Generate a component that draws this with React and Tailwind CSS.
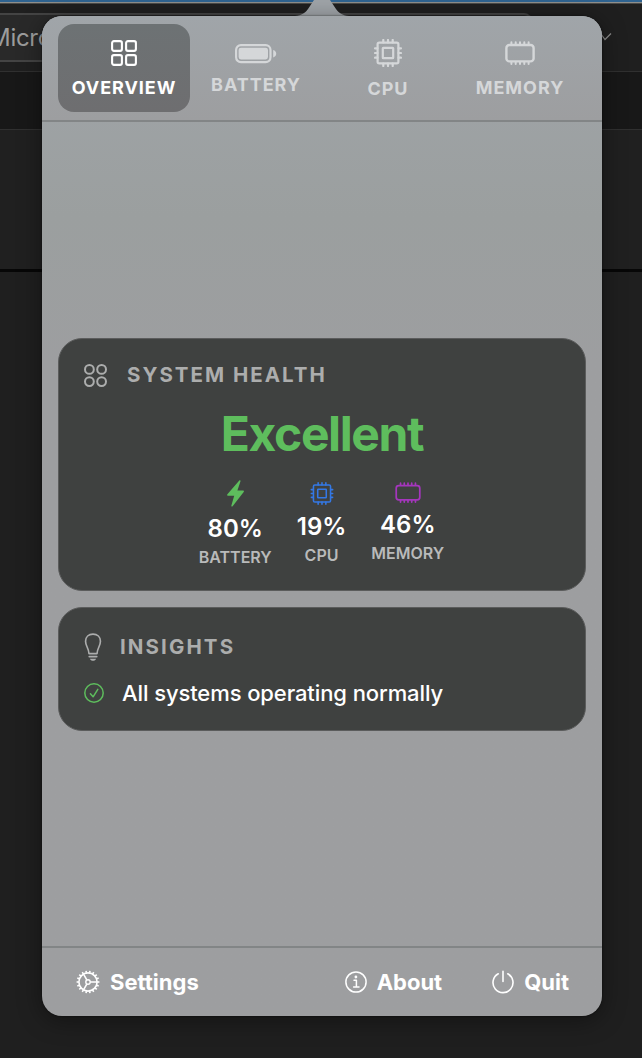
import React from "react";

function CpuIcon({ className, weight = 2.2 }) {
  return (
    <svg viewBox="0 0 28 28" className={className} fill="none" stroke="currentColor" strokeWidth={weight} strokeLinecap="round">
      <rect x="3.6" y="3.6" width="20.8" height="20.8" rx="1.6" />
      <rect x="8.8" y="8.8" width="10.4" height="10.4" rx="0.5" />
      {[9.3, 14, 18.7].map((p) => (
        <path key={p} d={`M${p} 1V3.5M${p} 24.5V27M1 ${p}H3.5M24.5 ${p}H27`} />
      ))}
    </svg>
  );
}

function MemoryIcon({ className, weight = 2.4 }) {
  return (
    <svg viewBox="0 0 30 24" className={className} fill="none" stroke="currentColor" strokeWidth={weight} strokeLinecap="round">
      <rect x="1.4" y="4" width="27.2" height="16.4" rx="3" />
      {[6.4, 10.7, 15, 19.3, 23.6].map((p) => (
        <path key={p} d={`M${p} 1.2V3.5M${p} 21V23`} strokeWidth="2" />
      ))}
    </svg>
  );
}

function BatteryIcon({ className }) {
  return (
    <svg viewBox="0 0 42 20" className={className} fill="none">
      <rect x="1.1" y="1.1" width="34.4" height="17" rx="4.8" stroke="currentColor" strokeWidth="2.2" />
      <rect x="3.6" y="3.7" width="29.4" height="11.8" rx="2.4" fill="currentColor" />
      <path d="M38.2 6C42.2 7.2 42.2 12.2 38.2 13.4Z" fill="currentColor" />
    </svg>
  );
}

function GridIcon({ className }) {
  return (
    <svg viewBox="0 0 26 26" className={className} fill="none" stroke="currentColor" strokeWidth="2.1">
      <rect x="1.1" y="1.1" width="9.8" height="9.8" rx="1.8" />
      <rect x="15.1" y="1.1" width="9.8" height="9.8" rx="1.8" />
      <rect x="1.1" y="15.1" width="9.8" height="9.8" rx="1.8" />
      <rect x="15.1" y="15.1" width="9.8" height="9.8" rx="1.8" />
    </svg>
  );
}

function CirclesIcon({ className }) {
  return (
    <svg viewBox="0 0 23 23" className={className} fill="none" stroke="currentColor" strokeWidth="2">
      <circle cx="5.4" cy="5.4" r="4.4" />
      <circle cx="17.6" cy="5.4" r="4.4" />
      <circle cx="5.4" cy="17.6" r="4.4" />
      <circle cx="17.6" cy="17.6" r="4.4" />
    </svg>
  );
}

function BoltIcon({ className }) {
  return (
    <svg viewBox="0 0 17 27" className={className} fill="currentColor">
      <path d="M12.3.6C12.9-.1 13.8.3 13.5 1.2L10.4 10.6H16.2C17 10.6 17.2 11.3 16.7 11.9L5.6 26.2C5 26.9 4.1 26.5 4.4 25.6L7.2 15.7H.9C.1 15.7-.2 15 .4 14.3Z" />
    </svg>
  );
}

function BulbIcon({ className }) {
  return (
    <svg viewBox="0 0 18 30" className={className} fill="none" stroke="currentColor" strokeWidth="1.7" strokeLinecap="round" strokeLinejoin="round">
      <path d="M4.8 21.3C4.6 15.5 1.3 13.5 1.3 8.6C1.3 4 4.6 1.2 9 1.2S16.7 4 16.7 8.6C16.7 13.5 13.4 15.5 13.2 21.3Z" />
      <path d="M5.2 24.4H12.8" strokeWidth="1.9" />
      <path d="M5.9 26.6H12.1C11.6 29.4 6.4 29.4 5.9 26.6Z" fill="currentColor" stroke="none" />
    </svg>
  );
}

function CheckIcon({ className }) {
  return (
    <svg viewBox="0 0 20 20" className={className} fill="none" stroke="currentColor" strokeWidth="1.5" strokeLinecap="round" strokeLinejoin="round">
      <circle cx="10" cy="10" r="9.2" />
      <path d="M6.4 10.7L9.1 13.8L13.8 6.4" />
    </svg>
  );
}

function GearIcon({ className }) {
  return (
    <svg viewBox="0 0 24 24" className={className} fill="none" stroke="currentColor" strokeWidth="1.6">
      <circle cx="12" cy="12" r="9.1" />
      <circle cx="12" cy="12" r="2.2" strokeWidth="1.4" />
      <path d="M14.3 12H21M10.9 10L7.5 4.2M10.9 14L7.5 19.8" strokeWidth="1.5" />
      {Array.from({ length: 18 }, (_, i) => (
        <path key={i} d="M12 .6V2.8" strokeWidth="1.6" transform={`rotate(${i * 20 + 10} 12 12)`} />
      ))}
    </svg>
  );
}

function InfoIcon({ className }) {
  return (
    <svg viewBox="0 0 22 22" className={className} fill="none" stroke="currentColor" strokeWidth="1.5" strokeLinecap="round" strokeLinejoin="round">
      <circle cx="11" cy="11" r="10.1" />
      <path d="M9 9.2H11.4V15.9M8.6 16H14" />
      <circle cx="10.9" cy="6" r="1.4" fill="currentColor" stroke="none" />
    </svg>
  );
}

function PowerIcon({ className }) {
  return (
    <svg viewBox="0 0 22 24" className={className} fill="none" stroke="currentColor" strokeWidth="1.6" strokeLinecap="round">
      <path d="M11 1.2V11.5M6.3 3.8A10 10 0 1 0 15.7 3.8" />
    </svg>
  );
}

function Backdrop() {
  return (
    <div className="absolute inset-0 flex flex-col bg-[#1f1f1f]">
      <div className="h-0.5 bg-[#2f6390]" />
      <div className="h-px bg-[#8f8f8b]" />
      <div className="h-px bg-[#4a4a48]" />
      <div className="flex h-[68px] border-b border-[#303030] pt-[9px]">
        <div className="flex h-[49px] w-[532px] shrink-0 items-center overflow-hidden rounded-r-lg border-y-2 border-r-2 border-[#444444] bg-[#292929]">
          <span className="-ml-[11px] text-[24px] leading-none tracking-[-0.3px] text-[#9c9c9c]">Micro</span>
        </div>
        <svg viewBox="0 0 12 8" className="ml-[68px] mt-[20px] h-[8px] w-[12px]" fill="none" stroke="#8b8b8b" strokeWidth="1.2">
          <path d="M1 1L5 6.5L11 .5" />
        </svg>
      </div>
      <div className="h-[57px] bg-[#181818]" />
      <div className="h-[140px] border-t border-[#303030] bg-[#202020]" />
      <div className="h-[3px] bg-[#070707]" />
      <div className="flex-1" />
    </div>
  );
}

function Tab({ icon, label, className }) {
  return (
    <button className={`flex h-[88px] w-[132px] flex-col items-center rounded-2xl text-lg font-[650] leading-none ${className}`}>
      {icon}
      {label}
    </button>
  );
}

function Metric({ icon, value, label, className }) {
  return (
    <div className={`flex flex-col items-center ${className}`}>
      {icon}
      <span className="text-2xl font-semibold leading-none text-white">{value}</span>
      <span className="mt-[8px] text-[16px] font-semibold leading-none text-[#b9baba]">{label}</span>
    </div>
  );
}

export default function App() {
  return (
    <main className="relative flex h-[1058px] w-[642px] flex-col overflow-hidden font-['Inter','Liberation_Sans',sans-serif]">
      <Backdrop />
      <section className="relative ml-[42px] flex h-[1016px] w-[560px] flex-col">
        <svg viewBox="0 0 560 16" className="h-4 w-[560px] shrink-0" fill="#a0a5a9">
          <path d="M253 16C260 15.5 263 13 266 9L272 0H288L294 9C297 13 300 15.5 307 16Z" />
        </svg>
        <div className="flex h-[1000px] flex-col rounded-[20px] bg-linear-to-b from-[#a0a5a9] via-[#9b9f9f] via-20% to-[#9d9ea0] to-35% shadow-[0_4px_24px_rgba(0,0,0,0.4),0_0_2px_rgba(0,0,0,0.7)]">
          <nav className="flex h-[106px] shrink-0 rounded-t-[20px] border-b-2 border-[#828586] bg-linear-to-b from-[#a0a5a9] to-[#9d9ea0] px-4 pt-2">
            <Tab
              className="bg-linear-to-b from-[#6d7274] to-[#6e6e70] pt-[16px] tracking-[0.95px] text-white"
              label="OVERVIEW"
              icon={<GridIcon className="mb-[13px] h-[26px] w-[26px]" />}
            />
            <Tab
              className="pt-[20px] tracking-[0.95px] text-[#d5d7d9]"
              label="BATTERY"
              icon={<BatteryIcon className="mb-[12px] h-[20px] w-[42px]" />}
            />
            <Tab
              className="pt-[15px] tracking-[0.95px] text-[#d5d7d9]"
              label="CPU"
              icon={<CpuIcon className="mb-[13px] h-[28px] w-[28px]" />}
            />
            <Tab
              className="pt-[17px] tracking-[0.95px] text-[#d5d7d9]"
              label="MEMORY"
              icon={<MemoryIcon className="mb-[14px] h-[24px] w-[30px]" />}
            />
          </nav>
          <div className="flex flex-1 flex-col justify-center gap-4 px-4">
            <article className="flex h-[253px] flex-col rounded-3xl border border-[#5b5c5c] bg-[#3f4140]">
              <h2 className="ml-[25px] mt-[25px] flex h-[23px] items-center gap-[20px] text-[20.5px] font-bold leading-none tracking-[2px] text-[#acadad]">
                <CirclesIcon className="h-[23px] w-[23px]" />
                SYSTEM HEALTH
              </h2>
              <p className="mt-[23px] text-center text-[48px] font-bold leading-none tracking-[-1.4px] text-[#5ebd5d]">Excellent</p>
              <div className="flex justify-center gap-[25px] pr-px pt-[22px]">
                <Metric value="80%" label="BATTERY" icon={<BoltIcon className="mb-[10px] h-[27px] w-[17px] text-[#5ebd5d]" />} />
                <Metric value="19%" label="CPU" className="pt-[2px]" icon={<CpuIcon weight={1.9} className="mb-[10px] h-[23px] w-[24px] text-[#3478e5]" />} />
                <Metric value="46%" label="MEMORY" className="pt-[2px]" icon={<MemoryIcon weight={2} className="mb-[10px] h-[21px] w-[26px] text-[#a536bd]" />} />
              </div>
            </article>
            <article className="flex h-[124px] flex-col rounded-3xl border border-[#5b5c5c] bg-[#3f4140]">
              <h2 className="ml-[25px] mt-[25px] flex h-[30px] items-center gap-[18px] text-[20.5px] font-bold leading-none tracking-[2.1px] text-[#acadad]">
                <BulbIcon className="h-[29px] w-[18px]" />
                INSIGHTS
              </h2>
              <p className="ml-[25px] mt-[19px] flex items-center gap-[18px] text-[22px] font-medium leading-none tracking-[-0.1px] text-white">
                <CheckIcon className="h-[20px] w-[20px] text-[#5ebd5d]" />
                All systems operating normally
              </p>
            </article>
          </div>
          <footer className="flex h-[70px] shrink-0 items-center border-t-2 border-[#828586] pl-[34px] pr-[33px] text-[22px] font-[650] leading-none text-white">
            <button className="flex items-center gap-[10px]">
              <GearIcon className="h-[24px] w-[24px]" />
              Settings
            </button>
            <button className="ml-auto flex items-center gap-[10px]">
              <InfoIcon className="h-[22px] w-[22px]" />
              About
            </button>
            <button className="ml-[50px] flex items-center gap-[10px]">
              <PowerIcon className="h-[24px] w-[22px]" />
              Quit
            </button>
          </footer>
        </div>
      </section>
    </main>
  );
}
